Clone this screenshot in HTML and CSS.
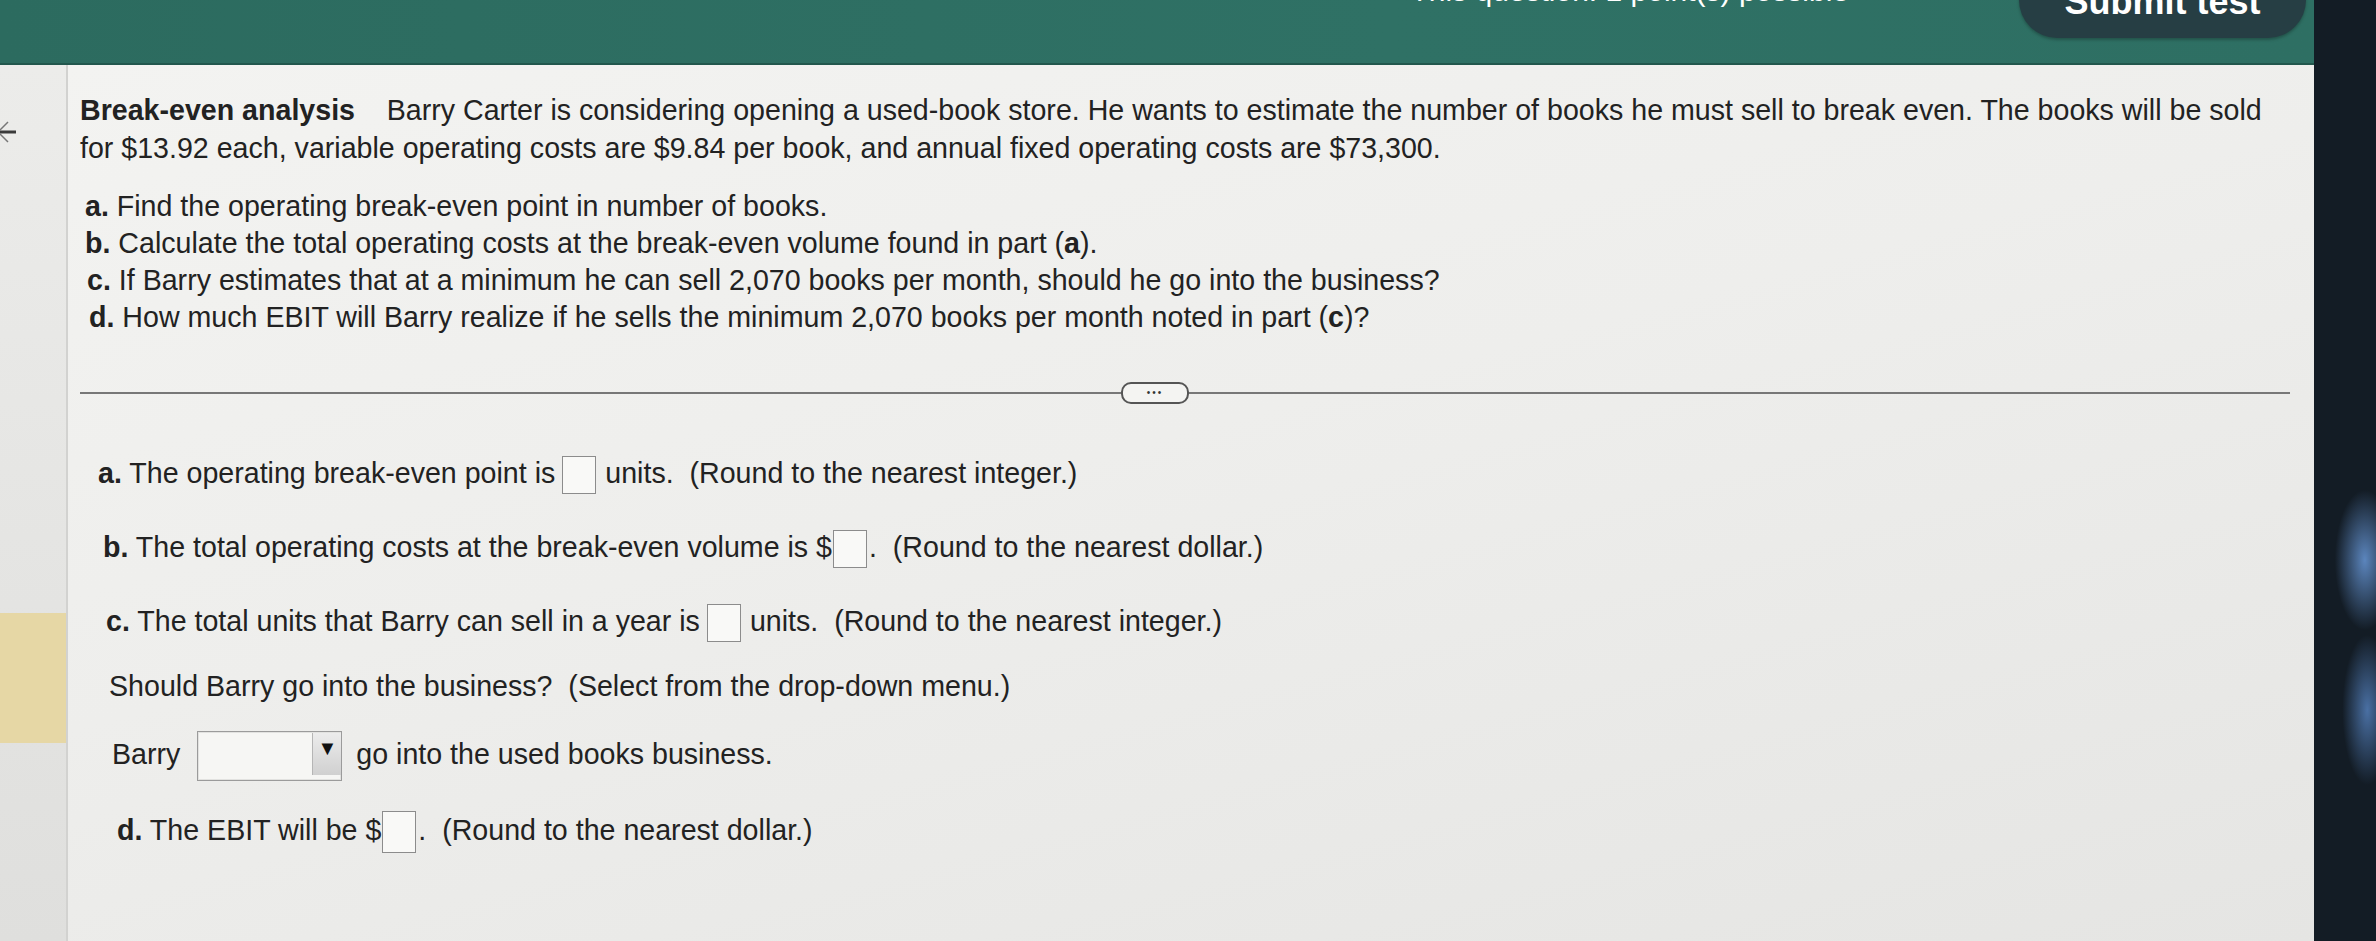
FILE: index.html
```html
<!DOCTYPE html>
<html lang="en">
<head>
    <meta charset="UTF-8">
    <meta name="viewport" content="width=device-width, initial-scale=1.0">
    <title>Break-even analysis</title>
    <link rel="stylesheet" href="styles.css">
</head>
<body>
    <div class="page">
        <div class="app">
            <!-- Top bar -->
            <header class="topbar">
                <div class="topbar-info">This question: 1 point(s) possible</div>
                <button class="submit-btn">Submit test</button>
            </header>

            <div class="workspace">
                <!-- Left question strip -->
                <aside class="side-strip">
                    <svg class="back-arrow" width="20" height="30" viewBox="0 0 20 30">
                        <path d="M-2 15 H16" stroke="#3a3a3a" stroke-width="3" fill="none"/>
                        <path d="M8 5 L-2 15 L8 25" stroke="#777" stroke-width="1.5" fill="none"/>
                    </svg>
                    <div class="strip-mark"></div>
                </aside>

                <!-- Question -->
                <main class="question">
                    <p class="intro">
                        <b class="intro-title">Break-even analysis</b>&nbsp;&nbsp;&nbsp; Barry Carter is considering opening a used-book store. He wants to estimate the number of books he must sell to break even. The books will be sold for $13.92 each, variable operating costs are $9.84 per book, and annual fixed operating costs are $73,300.
                    </p>

                    <ol class="parts">
                        <li><b>a.</b> Find the operating break-even point in number of books.</li>
                        <li><b>b.</b> Calculate the total operating costs at the break-even volume found in part (<b>a</b>).</li>
                        <li class="shift"><b>c.</b> If Barry estimates that at a minimum he can sell 2,070 books per month, should he go into the business?</li>
                        <li class="shift-more"><b>d.</b> How much EBIT will Barry realize if he sells the minimum 2,070 books per month noted in part (<b>c</b>)?</li>
                    </ol>

                    <div class="divider">
                        <span class="divider-line first"></span>
                        <span class="divider-pill">&bull;&bull;&bull;</span>
                        <span class="divider-line"></span>
                    </div>

                    <div class="answers">
                        <div class="answer-row row-a">
                            <b>a.</b> The operating break-even point is<span class="answer-box"></span>units.&nbsp; (Round to the nearest integer.)
                        </div>
                        <div class="answer-row row-b">
                            <b>b.</b> The total operating costs at the break-even volume is $<span class="answer-box tight"></span>.&nbsp; (Round to the nearest dollar.)
                        </div>
                        <div class="answer-row row-c">
                            <b>c.</b> The total units that Barry can sell in a year is<span class="answer-box"></span>units.&nbsp; (Round to the nearest integer.)
                        </div>
                        <div class="answer-row row-should">
                            Should Barry go into the business?&nbsp; (Select from the drop-down menu.)
                        </div>
                        <div class="answer-row row-select">
                            Barry<span class="dropdown"><span class="dropdown-btn">&#9660;</span></span>go into the used books business.
                        </div>
                        <div class="answer-row row-d">
                            <b>d.</b> The EBIT will be $<span class="answer-box tight tall"></span>.&nbsp; (Round to the nearest dollar.)
                        </div>
                    </div>
                </main>
            </div>
        </div>

        <!-- monitor edge -->
        <div class="bezel"></div>
    </div>
</body>
</html>
```

FILE: styles.css
```css
/* Question page, MyLab style */
body {
    margin: 0;
    font-family: "Liberation Sans", Arial, sans-serif;
    background-color: #131c25;
    overflow: hidden;
}
.page {
    display: flex;
    width: 2376px;
    height: 941px;
}
.app {
    flex: 1;
    display: flex;
    flex-direction: column;
    min-width: 0;
}

/* Top bar */
.topbar {
    height: 63px;
    flex-shrink: 0;
    display: flex;
    justify-content: flex-end;
    align-items: flex-start;
    background: linear-gradient(to right, #2c6b5f, #2f7165 60%, #2e6f63);
    border-bottom: 2px solid #22574d;
    overflow: hidden;
    padding-right: 8px;
}
.topbar-info {
    color: #fff;
    font-size: 30px;
    margin-top: -26px;
    margin-right: 170px;
}
.submit-btn {
    margin-top: -38px;
    width: 287px;
    height: 76px;
    border: none;
    border-radius: 38px;
    background-color: #263e44;
    color: #fff;
    font-family: "Liberation Sans", Arial, sans-serif;
    font-weight: bold;
    font-size: 36px;
    padding-top: 4px;
    box-shadow: 0 2px 3px rgba(0, 0, 0, 0.25);
}

/* Workspace */
.workspace {
    flex: 1;
    display: flex;
}
.side-strip {
    width: 66px;
    flex-shrink: 0;
    display: flex;
    flex-direction: column;
    background: linear-gradient(to bottom, #ececea, #dfdfdd);
    border-right: 2px solid #d2d2d0;
}
.back-arrow {
    margin-top: 52px;
}
.strip-mark {
    margin-top: 466px;
    height: 130px;
    background-color: #e6d7a5;
}

.question {
    flex: 1;
    padding: 26px 34px 0 12px;
    color: #222;
    font-size: 28.6px;
    background: linear-gradient(165deg, #f3f3f1 0%, #eeeeec 45%, #e5e5e3 100%);
}
.intro {
    margin: 0;
    line-height: 38px;
}
.parts {
    list-style: none;
    margin: 21px 0 0 5px;
    padding: 0;
    line-height: 37px;
}
.parts .shift {
    padding-left: 2px;
}
.parts .shift-more {
    padding-left: 4px;
}

/* Divider with the "more" pill */
.divider {
    display: flex;
    align-items: center;
    margin: 47px -10px 0 0;
    height: 20px;
}
.divider-line {
    flex: 1;
    height: 2px;
    background-color: #777;
}
.divider-line.first {
    flex: none;
    width: 1041px;
}
.divider-pill {
    width: 64px;
    height: 18px;
    border: 2px solid #555;
    border-radius: 10px;
    background-color: #f4f4f2;
    font-size: 10px;
    line-height: 18px;
    text-align: center;
    letter-spacing: 2px;
    color: #333;
}

/* Answers (rows drift right a little, like the photographed screen) */
.answers {
    margin-left: 18px;
}
.answer-row {
    height: 40px;
    line-height: 40px;
    margin-top: 34px;
}
.row-a {
    margin-top: 50px;
}
.row-b {
    padding-left: 5px;
}
.row-c {
    padding-left: 8px;
}
.row-should {
    margin-top: 25px;
    padding-left: 11px;
}
.row-select {
    height: 52px;
    line-height: 52px;
    margin-top: 22px;
    padding-left: 14px;
}
.row-d {
    margin-top: 30px;
    padding-left: 19px;
}
.answer-box {
    display: inline-block;
    vertical-align: middle;
    width: 32px;
    height: 36px;
    border: 1px solid #8c8c8c;
    background-color: #f9f9f7;
    margin: 0 9px 0 7px;
}
.answer-box.tight {
    margin: 0 2px 0 1px;
}
.answer-box.tall {
    height: 40px;
}
.dropdown {
    display: inline-flex;
    vertical-align: middle;
    justify-content: flex-end;
    width: 143px;
    height: 48px;
    border: 1px solid #9b9b9b;
    background-color: #f6f6f4;
    margin: 0 14px 0 17px;
    box-shadow: inset 0 0 0 1px #e2e2e0;
}
.dropdown-btn {
    width: 28px;
    height: 42px;
    margin-top: 1px;
    border-left: 1px solid #b5b5b5;
    background: linear-gradient(to bottom, #ececec, #d0d0d0);
    font-size: 20px;
    line-height: 30px;
    text-align: center;
    color: #111;
}

/* Monitor edge */
.bezel {
    width: 62px;
    flex-shrink: 0;
    background:
        radial-gradient(ellipse 30px 70px at 82% 560px, rgba(104, 152, 216, 0.85), transparent),
        radial-gradient(ellipse 25px 75px at 86% 710px, rgba(92, 140, 206, 0.75), transparent),
        #131c25;
}
```
